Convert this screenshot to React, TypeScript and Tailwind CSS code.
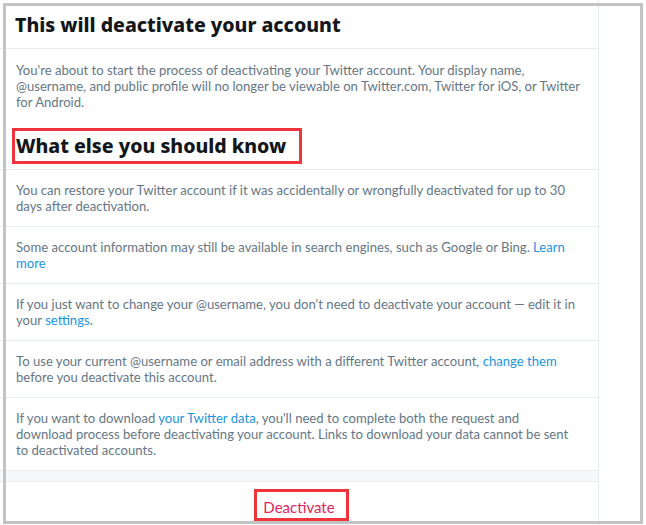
import React from "react";

const Link = ({ children }: { children: React.ReactNode }) => (
  <span className="text-[#1b95e0]">{children}</span>
);

const body = "whitespace-nowrap font-['Lato',sans-serif] text-[13.1px] leading-[16px] text-[#657786]";

const Row = ({ children, h = "h-[57px]" }: { children: React.ReactNode; h?: string }) => (
  <div className={`${h} shrink-0 border-b border-[#e6ecf0] px-[16px] pt-[12px] ${body}`}>
    {children}
  </div>
);

export default function App() {
  return (
    <div className="relative w-[646px] h-[525px] bg-white overflow-hidden font-['Noto_Sans',sans-serif]">
      <div className="w-[599px] h-full border-r border-[#e6ecf0] flex flex-col">
        <div className="h-[49px] shrink-0 border-b border-[#e6ecf0] px-[15px] pt-[13px]">
          <h1 className="text-[19.5px] leading-[24px] font-extrabold text-[#14171a]">
            This will deactivate your account
          </h1>
        </div>
        <div className={`h-[60px] shrink-0 px-[16px] pt-[13px] ${body}`}>
          You're about to start the process of deactivating your Twitter account. Your display name,
          <br />
          @username, and public profile will no longer be viewable on Twitter.com, Twitter for iOS, or Twitter
          <br />
          for Android.
        </div>
        <div className="h-[61px] shrink-0 border-b border-[#e6ecf0] pl-[12px] pt-[19px]">
          <div className="w-[290px] h-[36px] border-[3px] border-[#ef353b] pl-[1px] flex items-center">
            <h2 className="text-[19.5px] leading-[24px] font-extrabold text-[#14171a]">
              What else you should know
            </h2>
          </div>
        </div>
        <Row>
          You can restore your Twitter account if it was accidentally or wrongfully deactivated for up to 30
          <br />
          days after deactivation.
        </Row>
        <Row>
          Some account information may still be available in search engines, such as Google or Bing.{" "}
          <Link>Learn</Link>
          <br />
          <Link>more</Link>
        </Row>
        <Row>
          If you just want to change your @username, you don't need to deactivate your account — edit it in
          <br />
          your <Link>settings</Link>.
        </Row>
        <Row>
          To use your current @username or email address with a different Twitter account,{" "}
          <Link>change them</Link>
          <br />
          before you deactivate this account.
        </Row>
        <Row h="h-[73px]">
          If you want to download <Link>your Twitter data</Link>, you'll need to complete both the request and
          <br />
          download process before deactivating your account. Links to download your data cannot be sent
          <br />
          to deactivated accounts.
        </Row>
        <div className="h-[11px] shrink-0 bg-[#f5f8fa] border-b border-[#e6ecf0]" />
        <div className="flex-1 flex justify-center pt-[7px] pl-[5px]">
          <div className="w-[95px] h-[32px] border-[3px] border-[#ef353b] flex items-center justify-center pr-[5px] pt-[3px]">
            <span className="font-['Lato',sans-serif] text-[15px] leading-[20px] text-[#e0245e]">Deactivate</span>
          </div>
        </div>
      </div>
      <div className="pointer-events-none absolute left-[3px] top-[3px] w-[640px] h-[521px] border-[3px] border-[#c3c3c3]" />
    </div>
  );
}
